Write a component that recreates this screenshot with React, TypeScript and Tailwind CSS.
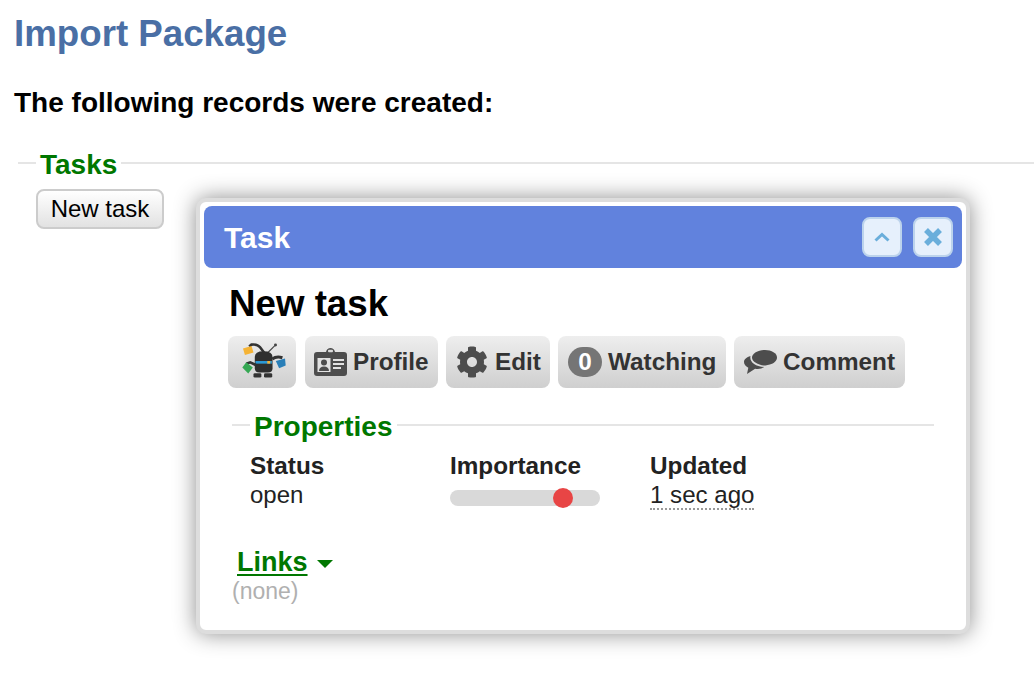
import React from "react";
import { FaCog } from "react-icons/fa";

const ProfileIcon = () => (
  <svg width="33" height="28" viewBox="0 0 33 28" fill="#4d4d4d">
    <path d="M3 4h9c.5-2.500 2.500-4 4.500-4s4 1.500 4.500 4h9a3 3 0 0 1 3 3v18a3 3 0 0 1-3 3H3a3 3 0 0 1-3-3V7a3 3 0 0 1 3-3z" />
    <rect x="14" y="1.800" width="5" height="2.500" rx="1" fill="#dcdcdc" />
    <rect x="3.500" y="10" width="13" height="14" fill="#e2e2e2" />
    <circle cx="10" cy="14.500" r="3" />
    <path d="M5 23c0-3 2-4.500 5-4.500s5 1.500 5 4.500z" />
    <rect x="19" y="11" width="11" height="2" fill="#e2e2e2" />
    <rect x="19" y="15" width="11" height="2" fill="#e2e2e2" />
    <rect x="19" y="19" width="8" height="2" fill="#e2e2e2" />
  </svg>
);

const CommentIcon = () => (
  <svg width="33" height="24" viewBox="0 0 33 24" fill="#4d4d4d">
    <path d="M21 0c6.600 0 12 3.300 12 7.500 0 3.200-3 6-7.200 7.100L21.500 15.500C15 15.500 8 12 8 7.500 8 3.300 14.400 0 21 0z" />
    <path d="M6.500 6c-.2.500-.2 1-.2 1.700 0 4.700 5.700 8.800 13.700 9.300-1.600 1.300-3.800 2-6.300 2-.9 0-1.800 0-2.600-.2L3 24l1.300-6.200C1.700 16.400 0 14.300 0 12c0-2.600 2.600-5 6.500-6z" />
  </svg>
);

const RobotIcon = () => (
  <svg width="46" height="38" viewBox="50 30 140 114">
    <path d="M75 40 L82 34 Q100 32 108 42 L120 58" stroke="#333" strokeWidth="8" fill="none" />
    <path d="M56 46 L82 38 L88 58 L62 66 Z" fill="#f5b335" />
    <path d="M132 58 L153 37" stroke="#444" strokeWidth="3.500" />
    <circle cx="155" cy="35" r="4.500" fill="#444" />
    <path d="M92 72 Q92 54 118 54 Q146 54 146 72 L146 106 Q146 119 132 119 L106 119 Q92 119 92 106 Z" fill="#2f2f2f" />
    <rect x="94" y="84" width="50" height="8" fill="#2c9ad6" />
    <rect x="130" y="84" width="9" height="8" fill="#f5b335" />
    <rect x="88" y="121" width="24" height="13" rx="4" fill="#333" />
    <rect x="120" y="121" width="25" height="13" rx="4" fill="#333" />
    <path d="M95 96 L78 88 L66 92" stroke="#333" strokeWidth="8" fill="none" />
    <path d="M66 88 L86 104 L72 122 L54 104 Z" fill="#35a853" />
    <path d="M145 78 Q158 68 176 74" stroke="#333" strokeWidth="9" fill="none" />
    <path d="M156 84 L184 76 L186 98 L166 106 Z" fill="#2a7fb8" />
  </svg>
);

const Legend = ({ children }: { children: React.ReactNode }) => (
  <legend className="px-1 pt-1 text-[28px] font-bold leading-[32px] text-[#007700]">{children}</legend>
);

const ActionButton = ({ children, className }: { children: React.ReactNode; className: string }) => (
  <div
    className={`flex h-[52px] items-center rounded-lg bg-gradient-to-b from-[#eeeeee] to-[#cfcfcf] text-[24.300px] font-bold text-[#333] ${className}`}
  >
    {children}
  </div>
);

const Property = ({ label, children }: { label: string; children: React.ReactNode }) => (
  <div className="w-[200px]">
    <div className="text-[24.300px] font-bold leading-[29px] text-[#222]">{label}</div>
    {children}
  </div>
);

const TaskDialog = () => (
  <div className="absolute left-[196px] top-[198px] h-[436px] w-[774px] rounded-[10px] border-4 border-[#dddddd] bg-white p-1 shadow-[0_0_22px_rgba(0,0,0,0.45)]">
    <div className="flex h-[62px] items-center justify-between rounded-lg bg-[#6182dd] pl-5 pr-[9px]">
      <span className="pt-[1px] text-[30px] font-bold text-white">Task</span>
      <div className="flex gap-[11px]">
        <button className="flex h-10 w-10 items-center justify-center rounded-lg border-2 border-[#bcd3ec] bg-[#e6f0fc]">
          <svg width="16" height="10" viewBox="0 0 16 10" fill="none" stroke="#6aaedb" strokeWidth="3">
            <path d="M1.500 8.500 L8 2.500 L14.500 8.500" />
          </svg>
        </button>
        <button className="flex h-10 w-10 items-center justify-center rounded-lg border-2 border-[#bcd3ec] bg-[#e6f0fc]">
          <svg width="20" height="20" viewBox="0 0 20 20" fill="none" stroke="#6aaedb" strokeWidth="5.500">
            <path d="M3 3 L17 17 M17 3 L3 17" />
          </svg>
        </button>
      </div>
    </div>

    <div className="pl-6">
      <h2 className="ml-[1px] mt-[15px] text-[36.700px] font-bold leading-[42px] text-black">New task</h2>

      <div className="mt-[11px] flex">
        <ActionButton className="mr-[9px] w-[68px] justify-center pl-[4px]">
          <RobotIcon />
        </ActionButton>
        <ActionButton className="mr-2 w-[133px] gap-[6px] pl-[9px]">
          <ProfileIcon />
          Profile
        </ActionButton>
        <ActionButton className="mr-2 w-[104px] gap-[7px] pl-[10px]">
          <FaCog className="h-[32px] w-[32px] text-[#4d4d4d]" />
          Edit
        </ActionButton>
        <ActionButton className="mr-2 w-[168px] gap-[6px] pl-[10px]">
          <span className="flex h-[30px] w-[34px] items-center justify-center rounded-full bg-[#757575] text-white">
            0
          </span>
          Watching
        </ActionButton>
        <ActionButton className="w-[171px] gap-[6px] pl-[10px]">
          <CommentIcon />
          Comment
        </ActionButton>
      </div>
    </div>

    <fieldset className="ml-7 mr-7 mt-[19px] border-t-2 border-[#e5e5e5] pl-[18px]">
      <Legend>Properties</Legend>
      <div className="mt-2 flex">
        <Property label="Status">
          <div className="text-2xl leading-[29px] text-[#222]">open</div>
        </Property>
        <Property label="Importance">
          <div className="relative mt-[10px] h-4 w-[150px] rounded-full bg-[#d9d9d9]">
            <div className="absolute left-[103px] top-[-2px] h-5 w-5 rounded-full bg-[#e84545]" />
          </div>
        </Property>
        <Property label="Updated">
          <span className="mt-[1px] inline-block border-b-2 border-dotted border-[#999] text-[24.100px] leading-[27px] text-[#222]">
            1 sec ago
          </span>
        </Property>
      </div>
    </fieldset>

    <div className="ml-7 mt-[36px]">
      <div className="flex items-center pl-[5px]">
        <span className="text-[27px] font-bold leading-[32px] text-[#007700] underline underline-offset-[3px]">
          Links
        </span>
        <span className="ml-[9px] mt-1 h-0 w-0 border-x-[8px] border-t-[8px] border-x-transparent border-t-[#007700]" />
      </div>
      <div className="text-[23px] leading-[27px] text-[#b0b0b0]">(none)</div>
    </div>
  </div>
);

export default function App() {
  return (
    <div className="relative h-[688px] w-[1034px] overflow-hidden bg-white font-['Liberation_Sans',Arial,sans-serif] text-black">
      <div className="pl-[14px] pt-[13px]">
        <h1 className="text-[36.700px] font-bold leading-[42px] text-[#4a6fa5]">Import Package</h1>
        <p className="mt-[32px] text-[28px] font-bold leading-[32px]">The following records were created:</p>
      </div>
      <fieldset className="ml-[18px] mt-[26px] border-t-2 border-[#e5e5e5] pl-[18px]">
        <Legend>Tasks</Legend>
        <button className="mt-2 h-10 w-[128px] rounded-lg border-2 border-[#cccccc] bg-gradient-to-b from-white to-[#e2e2e2] text-2xl text-black">
          New task
        </button>
      </fieldset>
      <TaskDialog />
    </div>
  );
}
